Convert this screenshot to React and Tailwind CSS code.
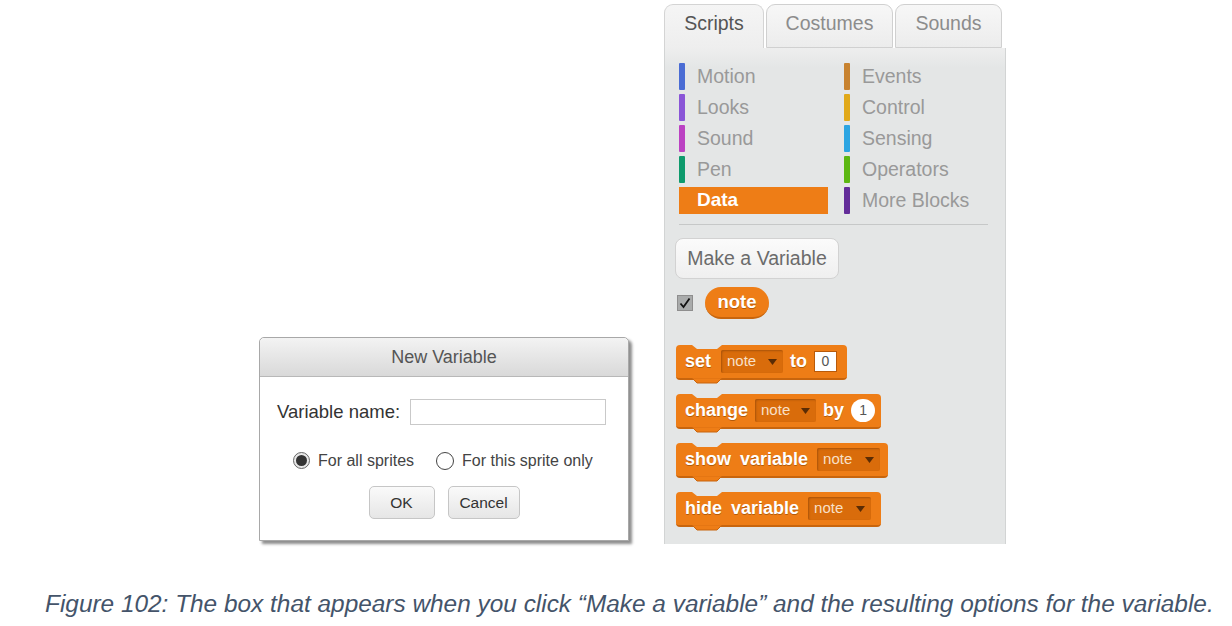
import React from 'react';

const font = { fontFamily: '"Liberation Sans", Arial, sans-serif' };

const Notches = () => (
  <>
    <svg className="absolute left-[16px] top-0" width="30" height="5" viewBox="0 0 30 5">
      <path d="M0 0 L5 4 L25 4 L30 0 Z" fill="#e4e6e6" />
    </svg>
    <svg className="absolute left-[16px] bottom-[-6px]" width="30" height="6" viewBox="0 0 30 6">
      <path d="M0 0 L5 5 L25 5 L30 0 Z" fill="#ee7d16" stroke="#c8650d" strokeWidth="1" />
      <rect x="0.5" y="-1" width="29" height="1.5" fill="#ee7d16" />
    </svg>
  </>
);

const Drop = ({ w }) => (
  <span className={`inline-flex items-center justify-between h-[23px] ${w} rounded-[2px] bg-[#d96c0b] shadow-[inset_1px_1px_2px_#a9530a] pl-[6px] pr-[6px] text-[15px] text-[#f8e0c8] font-normal [text-shadow:none]`}>
    note
    <svg width="9" height="6" viewBox="0 0 9 6"><path d="M0 0 L9 0 L4.5 6 Z" fill="#5a2c05" /></svg>
  </span>
);

const Block = ({ w, children }) => (
  <div className={`relative flex items-center gap-[7px] h-[35px] ${w} pl-[9px] rounded-[4px] bg-[#ee7d16] border-b-2 border-[#c8650d] text-white font-bold text-[18px] [text-shadow:0_1px_0_#b35a0a]`}>
    <Notches />
    {children}
  </div>
);

const cats = [
  ['Motion', '#4a6cd4', 'Events', '#c88330'],
  ['Looks', '#8a55d7', 'Control', '#e1a91a'],
  ['Sound', '#bb42c3', 'Sensing', '#2ca5e2'],
  ['Pen', '#0e9a6c', 'Operators', '#5cb712'],
  ['Data', '#ee7d16', 'More Blocks', '#632d99'],
];

export default function App() {
  return (
    <div className="w-[1232px] h-[626px] bg-white overflow-hidden" style={font}>
      <div className="flex items-start h-[556px]">
        {/* dialog */}
        <div className="ml-[259px] mt-[337px] w-[370px] h-[204px] border border-[#a8a8a8] rounded-t-[5px] bg-white shadow-[3px_3px_3px_rgba(0,0,0,0.45)]">
          <div className="h-[39px] flex items-center justify-center rounded-t-[5px] bg-gradient-to-b from-[#f3f3f3] to-[#d9d9d9] border-b border-[#b8b8b8] text-[18px] text-[#555]">
            New Variable
          </div>
          <div className="flex items-center mt-[21px] pl-[17px]">
            <span className="text-[18.5px] text-[#333]">Variable name:</span>
            <div className="ml-[10px] w-[196px] h-[26px] border border-[#c9c9c9] bg-white" />
          </div>
          <div className="flex items-center mt-[23px] pl-[33px] text-[16px] text-[#444]">
            <span className="w-[17px] h-[17px] rounded-full border border-[#666] bg-[#e8e8e8] flex items-center justify-center">
              <span className="w-[11px] h-[11px] rounded-full bg-[#333]" />
            </span>
            <span className="ml-[8px]">For all sprites</span>
            <span className="ml-[22px] w-[18px] h-[18px] rounded-full border border-[#444] bg-white" />
            <span className="ml-[8px]">For this sprite only</span>
          </div>
          <div className="flex justify-center gap-[13px] mt-[13px] text-[15.5px] text-[#333]">
            <div className="w-[66px] h-[33px] rounded-[5px] border border-[#c6c6c6] bg-gradient-to-b from-[#fafafa] to-[#e6e6e6] flex items-center justify-center">OK</div>
            <div className="w-[72px] h-[33px] rounded-[5px] border border-[#c6c6c6] bg-gradient-to-b from-[#fafafa] to-[#e6e6e6] flex items-center justify-center">Cancel</div>
          </div>
        </div>

        {/* scripts panel */}
        <div className="ml-[35px] mt-[4px] w-[342px] flex flex-col">
          <div className="flex items-end h-[44px] gap-[2px] text-[19.5px]">
            <div className="w-[100px] h-[44px] rounded-t-[9px] border border-b-0 border-[#d4d4d4] bg-gradient-to-b from-[#f5f5f5] to-[#eeeeee] flex items-center justify-center text-[#555] pb-[5px]">Scripts</div>
            <div className="w-[127px] h-[44px] rounded-t-[9px] border border-[#d0d0d0] bg-gradient-to-b from-[#f7f7f7] to-[#ececec] flex items-center justify-center text-[#8c8c8c] pb-[5px]">Costumes</div>
            <div className="w-[107px] h-[44px] rounded-t-[9px] border border-[#d0d0d0] bg-gradient-to-b from-[#f7f7f7] to-[#ececec] flex items-center justify-center text-[#8c8c8c] pb-[5px]">Sounds</div>
          </div>
          <div className="h-[496px] bg-[#e4e6e6] border-l border-r border-[#d2d4d4] bg-gradient-to-b from-[#eeeeee] to-[#e4e6e6] bg-[length:100%_20px] bg-no-repeat">
            <div className="pl-[14px] pt-[15px] flex flex-col gap-[4px]">
              {cats.map(([a, ca, b, cb]) => (
                <div key={a} className="flex h-[27px]">
                  {a === 'Data' ? (
                    <div className="w-[149px] h-[27px] bg-[#ee7d16] flex items-center pl-[18px] text-white font-bold text-[19px]">Data</div>
                  ) : (
                    <div className="w-[149px] flex items-center">
                      <span className="w-[6px] h-[27px] rounded-[1px]" style={{ background: ca }} />
                      <span className="ml-[12px] text-[19.5px] text-[#999]">{a}</span>
                    </div>
                  )}
                  <div className="ml-[16px] flex items-center">
                    <span className="w-[6px] h-[27px] rounded-[1px]" style={{ background: cb }} />
                    <span className="ml-[12px] text-[19.5px] text-[#999]">{b}</span>
                  </div>
                </div>
              ))}
            </div>
            <div className="ml-[14px] mt-[10px] w-[309px] h-px bg-[#c6c8c8]" />
            <div className="ml-[10px] mt-[13px] w-[164px] h-[41px] rounded-[8px] border border-[#d2d2d2] bg-gradient-to-b from-[#fbfbfb] to-[#efefef] flex items-center justify-center text-[19.5px] text-[#6b6b6b]">
              Make a Variable
            </div>
            <div className="flex items-center ml-[12px] mt-[8px]">
              <span className="w-[16px] h-[16px] bg-[#a9abab] border border-[#8e8e8e] flex items-center justify-center">
                <svg width="12" height="12" viewBox="0 0 12 12"><path d="M1.5 6.5 L4.5 10 L10.5 1.5" fill="none" stroke="#111" strokeWidth="1.8" /></svg>
              </span>
              <span className="ml-[12px] w-[64px] h-[32px] rounded-full bg-[#ee7d16] border-b-2 border-[#c8650d] flex items-center justify-center text-white font-bold text-[18.5px] [text-shadow:0_1px_0_#b35a0a]">note</span>
            </div>
            <div className="ml-[11px] mt-[26px] flex flex-col gap-[14px]">
              <Block w="w-[171px]">
                <span className="mr-[3px]">set</span>
                <Drop w="w-[62px]" />
                <span>to</span>
                <span className="w-[23px] h-[21px] bg-white border border-[#b85a0a] text-[14px] text-[#555] font-normal flex items-center justify-center [text-shadow:none]">0</span>
              </Block>
              <Block w="w-[205px]">
                <span>change</span>
                <Drop w="w-[61px]" />
                <span>by</span>
                <span className="w-[24px] h-[23px] rounded-full bg-white text-[14px] text-[#555] font-normal flex items-center justify-center [text-shadow:none]">1</span>
              </Block>
              <Block w="w-[212px]">
                <span>show</span>
                <span className="ml-[2px] mr-[2px]">variable</span>
                <Drop w="w-[63px]" />
              </Block>
              <Block w="w-[205px]">
                <span>hide</span>
                <span className="ml-[2px] mr-[2px]">variable</span>
                <Drop w="w-[63px]" />
              </Block>
            </div>
          </div>
        </div>
      </div>
      <p className="pl-[45px] mt-[34px] text-[24.4px] leading-[28px] italic text-[#44546a]">
        Figure 102: The box that appears when you click “Make a variable” and the resulting options for the variable.
      </p>
    </div>
  );
}
